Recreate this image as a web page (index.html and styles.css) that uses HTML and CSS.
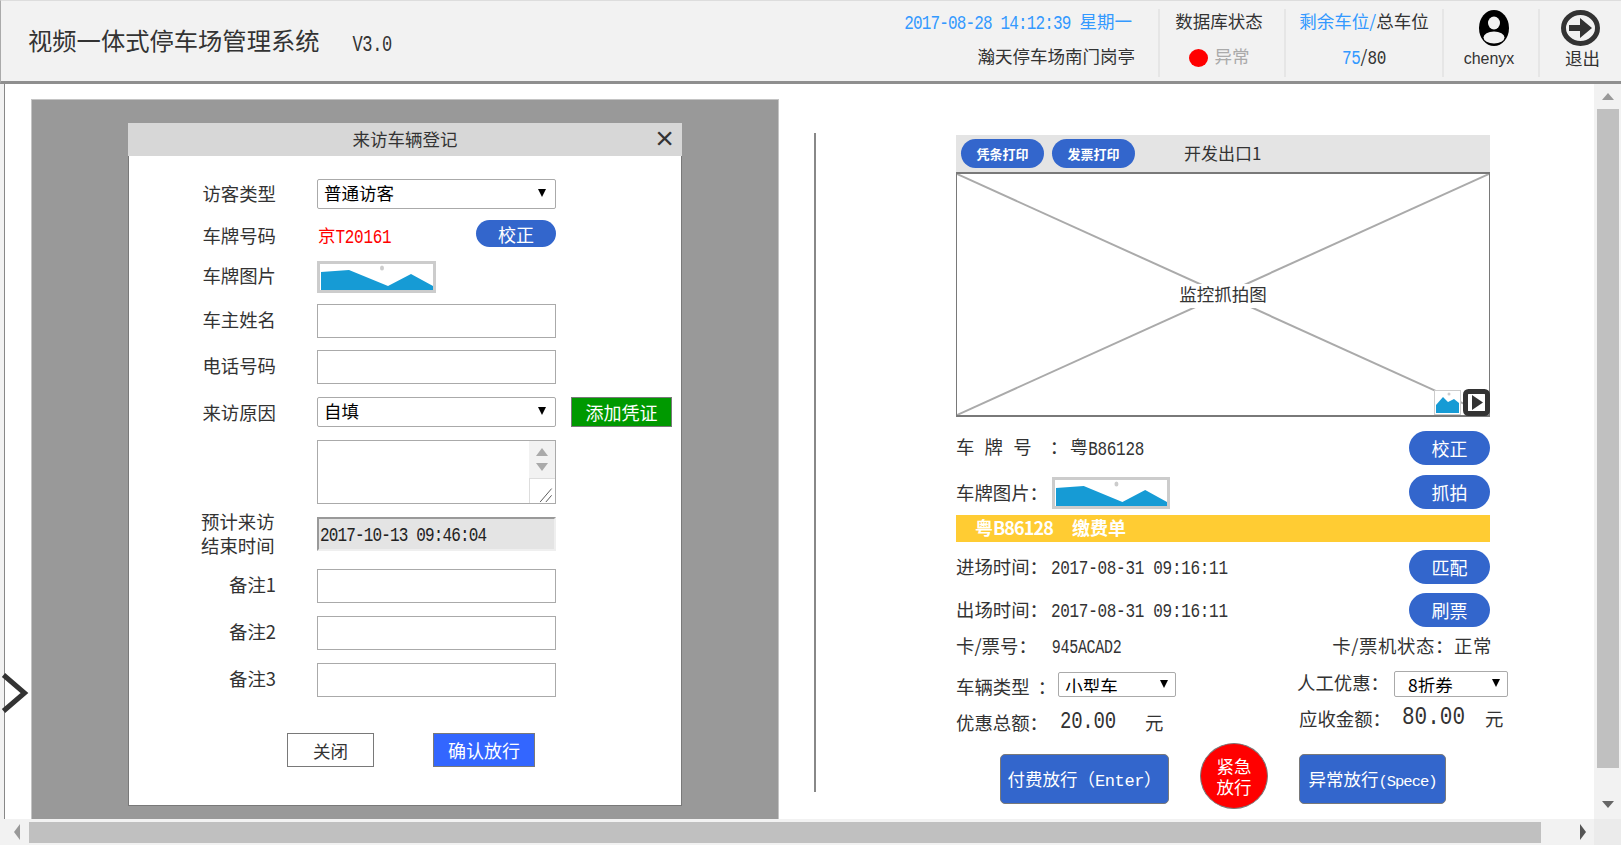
FILE: index.html
```html
<!DOCTYPE html>
<html lang="zh-CN">
<head>
  <meta charset="UTF-8">
  <title>视频一体式停车场管理系统</title>
  <link rel="stylesheet" href="styles.css">
</head>
<body>
<svg class="defs" width="0" height="0">
  <symbol id="pic" viewBox="0 0 113 26" preserveAspectRatio="none">
    <polygon points="1,8 29,6 68,22 91,10 113,22 113,26 1,26" fill="#169bd5"/>
    <ellipse cx="62" cy="4" rx="2" ry="2.5" fill="#ccc"/>
  </symbol>
</svg>

<!--顶部-->
<header class="top">
  <div class="brand">视频一体式停车场管理系统<span class="ver">V3.0</span></div>
  <div class="cell cell-date">
    <div class="line blue line-date"><span class="num num-tight num-date">2017-08-28 14:12:39</span> 星期一</div>
    <div class="line">瀚天停车场南门岗亭</div>
  </div>
  <div class="cell cell-db">
    <div class="line">数据库状态</div>
    <div class="line muted"><i class="dot"></i>异常</div>
  </div>
  <div class="cell cell-park">
    <div class="line"><span class="blue">剩余车位/</span>总车位</div>
    <div class="line"><span class="blue num">75</span>/<span class="num">80</span></div>
  </div>
  <div class="cell cell-user">
    <svg class="ico-user" viewBox="0 0 30 36">
      <ellipse cx="15" cy="18" rx="15" ry="18" fill="#000"/>
      <ellipse cx="15" cy="13" rx="6" ry="6.5" fill="#f2f2f2"/>
      <ellipse cx="15" cy="27.5" rx="10.5" ry="6" fill="#f2f2f2"/>
    </svg>
    <div class="uname">chenyx</div>
  </div>
  <div class="cell cell-exit">
    <svg class="ico-exit" viewBox="0 0 39 36">
      <ellipse cx="19.5" cy="18" rx="17" ry="15.5" fill="none" stroke="#333" stroke-width="5"/>
      <polygon points="8,15 19,15 19,8 31,18 19,28 19,21 8,21" fill="#333"/>
    </svg>
    <div class="exit-text">退出</div>
  </div>
</header>

<div class="middle">
  <div class="page">
    <!--左侧弹窗-->
    <section class="mask">
      <div class="modal">
        <div class="modal-title">来访车辆登记<span class="close">×</span></div>
        <div class="form">
          <div class="row row-type">
            <label class="lab">访客类型</label>
            <div class="sel-wrap"><select class="sel"><option>普通访客</option></select></div>
          </div>
          <div class="row row-plate">
            <label class="lab">车牌号码</label>
            <span class="plate">京<span class="num">T20161</span></span>
            <button class="pill pill-sm">校正</button>
          </div>
          <div class="row row-pic">
            <label class="lab">车牌图片</label>
            <svg class="thumb"><use href="#pic"/></svg>
          </div>
          <div class="row row-owner">
            <label class="lab">车主姓名</label>
            <input class="inp" type="text">
          </div>
          <div class="row">
            <label class="lab">电话号码</label>
            <input class="inp" type="text">
          </div>
          <div class="row row-reason">
            <label class="lab">来访原因</label>
            <div class="sel-wrap"><select class="sel"><option>自填</option></select></div>
            <button class="btn-add">添加凭证</button>
          </div>
          <div class="row row-memo">
            <label class="lab"></label>
            <div class="memo">
              <textarea class="memo-text"></textarea>
              <div class="memo-bar">
                <div class="memo-arrows"><i class="tri-up"></i><i class="tri-down"></i></div>
                <svg class="memo-grip" viewBox="0 0 25 25">
                  <path d="M10 24 L22 10 M16 24 L22 17" stroke="#555" fill="none"/>
                </svg>
              </div>
            </div>
          </div>
          <div class="row row-end">
            <label class="lab lab-two">预计来访<br>结束时间</label>
            <div class="readonly"><span class="num num-tight">2017-10-13 09:46:04</span></div>
          </div>
          <div class="row row-note1">
            <label class="lab">备注1</label>
            <input class="inp" type="text">
          </div>
          <div class="row row-note2">
            <label class="lab">备注2</label>
            <input class="inp" type="text">
          </div>
          <div class="row row-note3">
            <label class="lab">备注3</label>
            <input class="inp" type="text">
          </div>
          <div class="form-btns">
            <button class="btn-close">关闭</button>
            <button class="btn-ok">确认放行</button>
          </div>
        </div>
      </div>
    </section>

    <div class="divider"></div>

    <!--右侧收费-->
    <section class="pay">
      <div class="toolbar">
        <button class="tool-btn">凭条打印</button>
        <button class="tool-btn">发票打印</button>
        <span class="gate">开发出口1</span>
      </div>
      <div class="shot">
        <svg class="shot-x" viewBox="0 0 100 100" preserveAspectRatio="none">
          <line x1="0" y1="0" x2="100" y2="100" vector-effect="non-scaling-stroke"/>
          <line x1="100" y1="0" x2="0" y2="100" vector-effect="non-scaling-stroke"/>
        </svg>
        <span class="shot-label">监控抓拍图</span>
        <div class="shot-tools">
          <svg class="mini-pic" viewBox="0 0 27 25">
            <rect width="27" height="25" fill="#fff"/>
            <polygon points="2,15 9,7 14,12 20,9 25,13 25,23 2,23" fill="#169bd5"/>
            <circle cx="15" cy="4" r="1.5" fill="#ccc"/>
            <rect x=".5" y=".5" width="26" height="24" fill="none" stroke="#ccc"/>
          </svg>
          <svg class="mini-play" viewBox="0 0 27 27">
            <rect x="2.5" y="2.5" width="22" height="22" rx="3" fill="#fff" stroke="#333" stroke-width="5"/>
            <polygon points="9,6 20,13.5 9,21" fill="#333"/>
          </svg>
        </div>
      </div>

      <div class="pay-row pay-row-first">
        <span><span class="spaced">车牌号</span><span class="colon">：</span>粤<span class="num">B86128</span></span>
        <button class="pill">校正</button>
      </div>
      <div class="pay-row pay-row-pic">
        <span class="pic-label">车牌图片：<svg class="thumb thumb-pay"><use href="#pic"/></svg></span>
        <button class="pill">抓拍</button>
      </div>
      <div class="bill">粤<span class="bill-no">B86128</span><span class="bill-name">缴费单</span></div>
      <div class="pay-row pay-row-in">
        <span>进场时间：<span class="num time">2017-08-31 09:16:11</span></span>
        <button class="pill">匹配</button>
      </div>
      <div class="pay-row pay-row-out">
        <span>出场时间：<span class="num time">2017-08-31 09:16:11</span></span>
        <button class="pill">刷票</button>
      </div>
      <div class="info-row">
        <span>卡/票号：<span class="num card-no">945ACAD2</span></span>
        <span class="card-state">卡/票机状态：正常</span>
      </div>
      <div class="two-col two-col-sel">
        <div class="col-l">
          <span class="low">车辆类型&nbsp;&nbsp;：</span>
          <div class="sel-wrap sel-car"><select class="sel"><option>小型车</option></select></div>
        </div>
        <div class="col-r">
          <span class="high off-label">人工优惠：</span>
          <div class="sel-wrap sel-off"><select class="sel sel-pad"><option>8折券</option></select></div>
        </div>
      </div>
      <div class="two-col two-col-sum">
        <div class="col-l low">优惠总额：<span class="money">20.00</span>元</div>
        <div class="col-r high col-due">应收金额：<span class="money money-big">80.00</span>元</div>
      </div>
      <div class="actions">
        <button class="act act-pay">付费放行（<span class="act-en">Enter</span>）</button>
        <button class="act-sos">紧急<br>放行</button>
        <button class="act act-err">异常放行<span class="act-en act-en-sm">(Spece)</span></button>
      </div>
    </section>
  </div>

  <div class="vbar">
    <div class="vbar-btn"><i class="tri-up tri-up-big"></i></div>
    <div class="vbar-thumb"></div>
    <div class="vbar-btn vbar-btn-end"><i class="tri-down tri-down-big"></i></div>
  </div>

  <svg class="chevron" viewBox="0 0 28 42">
    <path d="M3 3 L24 21 L3 39" fill="none" stroke="#333" stroke-width="5"/>
  </svg>
</div>

<div class="hbar">
  <div class="hbar-btn"><i class="tri-left"></i></div>
  <div class="hbar-thumb"></div>
  <div class="hbar-btn hbar-btn-end"><i class="tri-right"></i></div>
  <div class="hbar-corner"></div>
</div>
</body>
</html>
```

FILE: styles.css
```css
* {
  padding: 0;
  margin: 0;
  box-sizing: border-box;
}

html, body {
  width: 1621px;
  height: 845px;
  overflow: hidden;
}

body {
  display: flex;
  flex-direction: column;
  background: #f2f2f2;
  color: #333;
  font-family: "Noto Sans CJK SC", "Liberation Sans", sans-serif;
  font-size: 17.5px;
  line-height: 24px;
}

button, select, input, textarea {
  font-family: inherit;
  font-size: inherit;
  color: inherit;
}

.defs {
  position: absolute;
}

/* 数字是窄高的，拉一下 */
.num {
  display: inline-block;
  font-family: "Liberation Mono", "Noto Sans CJK SC", monospace;
  font-size: 16px;
  letter-spacing: -0.3px;
  transform: scaleY(1.3);
}

.num-tight {
  letter-spacing: -0.85px;
}

.num-date {
  margin-right: 5px;
}

.blue {
  color: #39f;
}

/* 顶部 */
.top {
  flex: none;
  height: 84px;
  display: flex;
  align-items: flex-start;
  padding-top: 8px;
  border-top: 1px solid #ddd;
  border-left: 1px solid #aaa;
  border-bottom: 3px solid #8f8f8f;
}

.brand {
  flex: 1;
  padding: 15px 0 0 27px;
  font-size: 24.3px;
  line-height: 32px;
  white-space: nowrap;
}

.ver {
  display: inline-block;
  margin-left: 33px;
  font-family: "Liberation Mono", monospace;
  font-size: 17px;
  letter-spacing: -0.4px;
  transform: scaleY(1.3);
}

.cell {
  height: 68px;
  flex: none;
}

.cell-date {
  display: flex;
  flex-direction: column;
  align-items: flex-end;
  padding-right: 23px;
  white-space: nowrap;
}

.line {
  height: 28px;
  line-height: 28px;
  white-space: nowrap;
}

.line:first-child {
  margin-top: -2px;
}

.line + .line {
  margin-top: 7px;
}

.line-date {
  padding-right: 3px;
}

.cell-db, .cell-park, .cell-user, .cell-exit {
  border-left: 2px solid #e6e6e6;
  text-align: center;
}

.cell-db {
  width: 126px;
  padding-right: 6px;
}

.cell-park {
  width: 158px;
}

.cell-user {
  width: 96px;
}

.cell-exit {
  width: 83px;
}

.muted {
  color: #aaa;
}

.dot {
  display: inline-block;
  width: 19px;
  height: 18px;
  margin-right: 7px;
  border-radius: 50%;
  background: #f00;
  vertical-align: -4px;
}

.ico-user {
  display: block;
  width: 30px;
  height: 36px;
  margin: 1px 0 0 35px;
}

.uname {
  font-family: "Liberation Sans", sans-serif;
  font-size: 16px;
  line-height: 24px;
  margin: 1px 0 0 -4px;
}

.ico-exit {
  display: block;
  width: 39px;
  height: 36px;
  margin: 1px 0 0 21px;
}

.exit-text {
  margin: 0 0 0 4px;
  line-height: 24px;
}

/* 中间区域 */
.middle {
  position: relative;
  flex: none;
  height: 735px;
  display: flex;
  padding-left: 4px;
}

.page {
  width: 1590px;
  height: 735px;
  display: flex;
  align-items: flex-start;
  background: #fff;
  border-left: 1px solid #888;
  overflow: hidden;
}

.mask {
  flex: none;
  width: 748px;
  height: 720px;
  margin: 15px 0 0 26px;
  padding: 23px 0 0 96px;
  background: #999;
  border: 1px solid #c4c4c4;
  border-bottom: 0;
}

.modal {
  width: 554px;
  height: 683px;
  background: #fff;
  border: 1px solid #797979;
  border-top: 0;
}

.modal-title {
  position: relative;
  height: 33px;
  margin: 0 -1px;
  background: #d7d7d7;
  text-align: center;
  line-height: 32px;
}

.close {
  position: absolute;
  right: 8px;
  top: -3px;
  font-family: "Liberation Sans", sans-serif;
  font-size: 32px;
  line-height: 36px;
}

.form {
  padding: 23px 0 0 0;
}

.row {
  display: flex;
  align-items: center;
  margin-top: 12px;
}

.row:first-child {
  margin-top: 0;
}

.lab {
  flex: none;
  width: 147px;
  margin-right: 41px;
  padding-bottom: 4px;
  text-align: right;
  font-size: 18.4px;
}

.row-type .lab {
  padding-bottom: 2px;
}

.sel-wrap {
  position: relative;
  width: 239px;
  height: 30px;
  flex: none;
}

.sel-wrap::after {
  content: "";
  position: absolute;
  right: 10px;
  top: 10px;
  border-left: 4px solid transparent;
  border-right: 4px solid transparent;
  border-top: 8px solid #000;
  pointer-events: none;
}

.sel {
  width: 100%;
  height: 100%;
  padding: 0 0 3px 6px;
  appearance: none;
  background: #fff;
  color: #000;
  border: 1px solid #aaa;
  border-radius: 2px;
}

.sel-pad {
  padding-left: 13px;
}

.inp {
  display: block;
  width: 239px;
  height: 34px;
  flex: none;
  background: #fff;
  border: 1px solid #aaa;
}

.row-plate {
  height: 27px;
  margin-top: 11px;
}

.row-plate .lab {
  padding: 3px 0 0;
}

.plate {
  width: 159px;
  padding: 5px 0 0 1px;
  color: #f00;
}

.pill {
  flex: none;
  width: 81px;
  height: 34px;
  background: #36c;
  color: #fff;
  border: 0;
  border-radius: 17px;
  font-size: 18px;
}

.pill-sm {
  width: 80px;
  height: 27px;
  border-radius: 14px;
}

.row-pic {
  height: 32px;
  margin-top: 14px;
}

.thumb {
  display: block;
  width: 119px;
  height: 32px;
  flex: none;
  background: #fff;
  border: 3px solid #ccc;
}

.row-owner {
  margin-top: 11px;
}

.row-reason {
  margin-top: 13px;
}

.row-reason .lab {
  padding-bottom: 0;
}

.btn-add {
  width: 101px;
  height: 30px;
  margin-left: 15px;
  flex: none;
  background: #090;
  color: #fff;
  border: 1px solid #797979;
  font-size: 18px;
}

.row-memo {
  margin-top: 13px;
}

.memo {
  display: flex;
  width: 239px;
  height: 64px;
  border: 1px solid #aaa;
}

.memo-text {
  flex: 1;
  min-width: 0;
  border: 0;
  outline: 0;
  resize: none;
}

.memo-bar {
  width: 26px;
  display: flex;
  flex-direction: column;
}

.memo-arrows {
  height: 37px;
  display: flex;
  flex-direction: column;
  align-items: center;
  justify-content: space-around;
  padding: 4px 0;
  background: #f2f2f2;
}

.memo-grip {
  display: block;
  width: 26px;
  height: 25px;
  border: 1px solid #ddd;
  border-right: 0;
  border-bottom: 0;
}

.tri-up, .tri-down {
  display: block;
  width: 0;
  height: 0;
  border-left: 6px solid transparent;
  border-right: 6px solid transparent;
}

.tri-up {
  border-bottom: 8px solid #aaa;
}

.tri-down {
  border-top: 8px solid #aaa;
}

.row-end {
  margin-top: 13px;
}

.lab-two {
  margin-top: -8px;
  margin-bottom: -8px;
  padding: 0 0 2px 72px;
  text-align: left;
  line-height: 24px;
  white-space: nowrap;
}

.readonly {
  width: 239px;
  height: 34px;
  display: flex;
  align-items: center;
  padding: 3px 0 0 1px;
  background: #e4e4e4;
  border-top: 2px solid #999;
  border-left: 2px solid #999;
  border-right: 2px solid #efefef;
  border-bottom: 2px solid #efefef;
  color: #222;
}

.row-note1 {
  margin-top: 18px;
}

.row-note2 {
  margin-top: 13px;
}

.row-note3 {
  margin-top: 13px;
}

.form-btns {
  display: flex;
  margin: 36px 0 0 158px;
}

.btn-close {
  width: 87px;
  height: 34px;
  background: #fff;
  border: 1px solid #797979;
}

.btn-ok {
  width: 102px;
  height: 34px;
  margin-left: 59px;
  background: #36f;
  color: #fff;
  border: 1px solid #797979;
  font-size: 18px;
}

.divider {
  flex: none;
  width: 2px;
  height: 659px;
  margin: 49px 0 0 35px;
  background: #888;
}

/* 右侧 */
.pay {
  flex: none;
  width: 551px;
  margin: 51px 0 0 140px;
  font-size: 18.4px;
}

.toolbar {
  width: 534px;
  height: 37px;
  display: flex;
  align-items: center;
  padding-left: 5px;
  background: #e4e4e4;
}

.tool-btn {
  width: 83px;
  height: 29px;
  margin-right: 8px;
  background: #36c;
  color: #fff;
  border: 0;
  border-radius: 15px;
  font-size: 13px;
  font-weight: 700;
}

.gate {
  margin-left: 41px;
  padding-bottom: 2px;
  font-size: 17px;
}

.shot {
  position: relative;
  width: 534px;
  height: 245px;
  display: flex;
  align-items: center;
  justify-content: center;
  border: 2px solid #797979;
  border-width: 2px 1px 2px 1px;
}

.shot-x {
  position: absolute;
  left: 0;
  top: 0;
  width: 100%;
  height: 100%;
}

.shot-x line {
  stroke: #aaa;
  stroke-width: 2;
}

.shot-label {
  position: relative;
  width: 90px;
  height: 24px;
  margin-top: 2px;
  background: #fff;
  font-size: 17.5px;
  line-height: 20px;
  text-align: center;
  white-space: nowrap;
}

.shot-tools {
  position: absolute;
  right: -1px;
  bottom: -1px;
  display: flex;
  align-items: flex-end;
  gap: 2px;
}

.mini-pic {
  display: block;
  width: 27px;
  height: 25px;
  margin-bottom: 1px;
}

.mini-play {
  display: block;
  width: 27px;
  height: 27px;
}

.pay-row {
  width: 534px;
  height: 34px;
  display: flex;
  align-items: center;
  justify-content: space-between;
}

.pay-row-first {
  margin-top: 14px;
}

.pay-row-pic {
  margin-top: 10px;
}

.spaced {
  letter-spacing: 10.2px;
}

.colon {
  display: inline-block;
  width: 28px;
  padding-left: 8px;
}

.pic-label {
  display: flex;
  align-items: center;
}

.thumb-pay {
  width: 118px;
  margin: 2px 0 0 4px;
}

.bill {
  width: 534px;
  height: 27px;
  margin-top: 6px;
  padding-left: 19px;
  background: #fc3;
  color: #fff;
  font-size: 18px;
  font-weight: 700;
  line-height: 25px;
}

.bill-no {
  letter-spacing: -0.9px;
}

.bill-name {
  margin-left: 19px;
}

.pay-row-in {
  margin-top: 8px;
}

.pay-row-out {
  margin-top: 9px;
}

.time {
  margin-left: 3px;
  vertical-align: 1px;
}

.info-row {
  width: 536px;
  height: 24px;
  margin-top: 6px;
  display: flex;
  justify-content: space-between;
}

.card-no {
  margin-left: 15px;
  font-size: 15px;
  letter-spacing: -0.3px;
  vertical-align: 1px;
}

.card-state {
  letter-spacing: 0.6px;
}

.two-col {
  display: flex;
  align-items: center;
  white-space: nowrap;
}

.two-col-sel {
  height: 26px;
  margin-top: 14px;
}

.two-col-sum {
  height: 24px;
  margin-top: 11px;
}

.col-l {
  flex: none;
  width: 341px;
  display: flex;
  align-items: center;
}

.col-r {
  display: flex;
  align-items: center;
}

.low {
  padding-top: 3px;
}

.high {
  padding-bottom: 4px;
}

.sel-car {
  width: 118px;
  height: 25px;
  margin-left: 2px;
  font-size: 17.5px;
}

.off-label {
  width: 97px;
}

.sel-off {
  width: 114px;
  height: 26px;
  font-size: 17.5px;
}

.sel-car::after, .sel-off::after {
  top: 8px;
  right: 8px;
}

.col-due {
  padding-left: 2px;
}

.money {
  width: 97px;
  padding-left: 12px;
  font-family: "Liberation Mono", monospace;
  font-size: 19px;
  letter-spacing: -0.2px;
  transform: scaleY(1.25);
}

.money-big {
  width: 94px;
  padding-left: 11px;
  font-size: 21px;
  letter-spacing: 0;
}

.actions {
  width: 534px;
  height: 66px;
  margin-top: 11px;
  padding-left: 44px;
  display: flex;
  align-items: center;
}

.act {
  height: 50px;
  margin-top: 5px;
  background: #36c;
  color: #fff;
  border: 1px solid #797979;
  border-radius: 5px;
  font-size: 17.5px;
  white-space: nowrap;
}

.act-pay {
  width: 169px;
}

.act-err {
  width: 147px;
  flex: none;
  margin-left: 31px;
}

.act-en {
  font-family: "Liberation Mono", monospace;
  font-size: 17px;
  letter-spacing: -0.4px;
}

.act-en-sm {
  font-size: 15.5px;
  letter-spacing: -1px;
}

.act-sos {
  width: 68px;
  height: 66px;
  flex: none;
  margin-left: 31px;
  background: #f00;
  color: #fff;
  border: 1px solid #797979;
  border-radius: 50%;
  font-size: 17.5px;
  line-height: 21px;
}

.chevron {
  position: absolute;
  left: 0;
  top: 588px;
  width: 29px;
  height: 42px;
}

/* 滚动条 */
.vbar {
  flex: none;
  width: 27px;
  display: flex;
  flex-direction: column;
  align-items: center;
  background: #f2f2f2;
}

.vbar-btn {
  height: 25px;
  flex: none;
  display: flex;
  align-items: center;
  justify-content: center;
}

.vbar-btn-end {
  margin-top: auto;
  height: 51px;
  padding-top: 22px;
}

.vbar-thumb {
  width: 22px;
  height: 659px;
  background: #c0c0c0;
}

.tri-up-big {
  border-bottom: 7px solid #999;
}

.tri-down-big {
  border-top: 7px solid #666;
}

.hbar {
  flex: 1;
  display: flex;
  align-items: center;
  padding-left: 5px;
}

.hbar-btn {
  width: 24px;
  display: flex;
  justify-content: center;
  flex: none;
}

.hbar-thumb {
  width: 1512px;
  height: 21px;
  background: #c0c0c0;
}

.hbar-btn-end {
  width: 53px;
  padding-left: 30px;
}

.hbar-corner {
  flex: none;
  width: 27px;
  height: 26px;
  background: #ebebeb;
}

.tri-left, .tri-right {
  display: block;
  width: 0;
  height: 0;
  border-top: 8px solid transparent;
  border-bottom: 8px solid transparent;
}

.tri-left {
  border-right: 6px solid #999;
}

.tri-right {
  border-left: 6px solid #555;
}
```
